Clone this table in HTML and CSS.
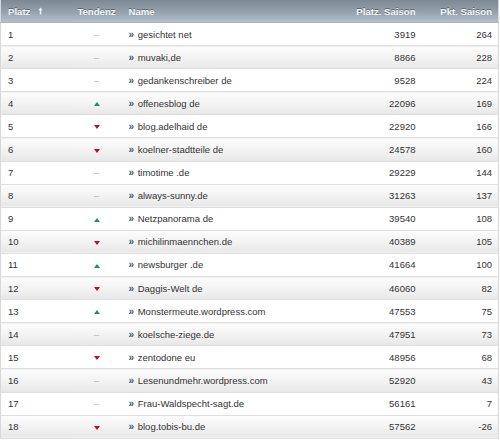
FILE: index.html
```html
<!DOCTYPE html>
<html lang="de">
<head>
<meta charset="utf-8">
<title>Ranking</title>
<link rel="stylesheet" href="styles.css">
</head>
<body>
<table class="rank">
  <colgroup>
    <col class="c-platz"><col class="c-tend"><col class="c-name"><col class="c-ps"><col class="c-pkt">
  </colgroup>
  <thead>
    <tr>
      <th class="left">Platz <svg class="sort" width="5" height="8" viewBox="0 0 5 8"><path d="M2.5 0.5 L4.6 3.2 H3.2 V7.5 H1.8 V3.2 H0.4 Z" fill="#eef1f4"/></svg></th>
      <th class="center">Tendenz</th>
      <th class="left">Name</th>
      <th class="right">Platz. Saison</th>
      <th class="right">Pkt. Saison</th>
    </tr>
  </thead>
  <tbody>
    <tr><td>1</td><td class="center"><span class="dash">–</span></td><td><span class="go">»</span> gesichtet net</td><td class="right">3919</td><td class="right">264</td></tr>
    <tr><td>2</td><td class="center"><span class="dash">–</span></td><td><span class="go">»</span> muvaki,de</td><td class="right">8866</td><td class="right">228</td></tr>
    <tr><td>3</td><td class="center"><span class="dash">–</span></td><td><span class="go">»</span> gedankenschreiber de</td><td class="right">9528</td><td class="right">224</td></tr>
    <tr><td>4</td><td class="center"><span class="up"></span></td><td><span class="go">»</span> offenesblog de</td><td class="right">22096</td><td class="right">169</td></tr>
    <tr><td>5</td><td class="center"><span class="down"></span></td><td><span class="go">»</span> blog.adelhaid de</td><td class="right">22920</td><td class="right">166</td></tr>
    <tr><td>6</td><td class="center"><span class="down"></span></td><td><span class="go">»</span> koelner-stadtteile de</td><td class="right">24578</td><td class="right">160</td></tr>
    <tr><td>7</td><td class="center"><span class="dash">–</span></td><td><span class="go">»</span> timotime .de</td><td class="right">29229</td><td class="right">144</td></tr>
    <tr><td>8</td><td class="center"><span class="dash">–</span></td><td><span class="go">»</span> always-sunny.de</td><td class="right">31263</td><td class="right">137</td></tr>
    <tr><td>9</td><td class="center"><span class="up"></span></td><td><span class="go">»</span> Netzpanorama de</td><td class="right">39540</td><td class="right">108</td></tr>
    <tr><td>10</td><td class="center"><span class="down"></span></td><td><span class="go">»</span> michilinmaennchen.de</td><td class="right">40389</td><td class="right">105</td></tr>
    <tr><td>11</td><td class="center"><span class="up"></span></td><td><span class="go">»</span> newsburger .de</td><td class="right">41664</td><td class="right">100</td></tr>
    <tr><td>12</td><td class="center"><span class="down"></span></td><td><span class="go">»</span> Daggis-Welt de</td><td class="right">46060</td><td class="right">82</td></tr>
    <tr><td>13</td><td class="center"><span class="up"></span></td><td><span class="go">»</span> Monstermeute.wordpress.com</td><td class="right">47553</td><td class="right">75</td></tr>
    <tr><td>14</td><td class="center"><span class="dash">–</span></td><td><span class="go">»</span> koelsche-ziege.de</td><td class="right">47951</td><td class="right">73</td></tr>
    <tr><td>15</td><td class="center"><span class="down"></span></td><td><span class="go">»</span> zentodone eu</td><td class="right">48956</td><td class="right">68</td></tr>
    <tr><td>16</td><td class="center"><span class="dash">–</span></td><td><span class="go">»</span> Lesenundmehr.wordpress.com</td><td class="right">52920</td><td class="right">43</td></tr>
    <tr><td>17</td><td class="center"><span class="dash">–</span></td><td><span class="go">»</span> Frau-Waldspecht-sagt.de</td><td class="right">56161</td><td class="right">7</td></tr>
    <tr><td>18</td><td class="center"><span class="down"></span></td><td><span class="go">»</span> blog.tobis-bu.de</td><td class="right">57562</td><td class="right">-26</td></tr>
  </tbody>
</table>
</body>
</html>
```
FILE: styles.css
```css
html, body {
  margin: 0;
  padding: 0;
  background: #fff;
}
body {
  font-family: "Liberation Sans", Arial, sans-serif;
  font-size: 9.5px;
  color: #333;
}
.rank {
  width: 498px;
  border-collapse: collapse;
  table-layout: fixed;
  border-left: 1px solid #d8d8d8;
  border-right: 1px solid #d8d8d8;
}
.c-platz { width: 70px; }
.c-tend { width: 52px; }
.c-name { width: 208px; }
.c-ps { width: 91px; }
.c-pkt { width: 77px; }

.rank th {
  height: 22px;
  padding: 0 6px;
  font-weight: bold;
  font-size: 9.6px;
  color: #f6f8fa;
  text-shadow: 0 -1px 0 rgba(60, 70, 80, 0.65);
  background: linear-gradient(to bottom, #7c8995 0%, #95a2ad 55%, #b3bec7 100%);
  border-bottom: 1px solid #a9b3bb;
  vertical-align: middle;
  white-space: nowrap;
}
.rank td {
  height: 22.1px;
  padding: 0 6px;
  border-bottom: 1px solid #dedede;
  vertical-align: middle;
  white-space: nowrap;
  overflow: hidden;
}
.rank tbody tr:nth-child(even) td {
  background: linear-gradient(to bottom, #fcfcfc 0%, #f3f3f3 50%, #e7e7e7 100%);
}
.rank td:first-child { padding-left: 7px; }
.rank th:first-child { padding-left: 7px; }
.left { text-align: left; }
.center { text-align: center; }
.right { text-align: right; }
.rank th.center, .rank td.center { padding: 0; }

.sort {
  margin-left: 5px;
  vertical-align: 0px;
}
.go {
  color: #3b566e;
  font-weight: bold;
  font-size: 10px;
  margin-right: 1px;
}
.dash {
  color: #b5b5b5;
}
.up, .down {
  display: inline-block;
  width: 0;
  height: 0;
  border-left: 3.5px solid transparent;
  border-right: 3.5px solid transparent;
  vertical-align: middle;
}
.up {
  border-bottom: 4px solid #2c8c5e;
}
.down {
  border-top: 4px solid #b2141e;
}
```
